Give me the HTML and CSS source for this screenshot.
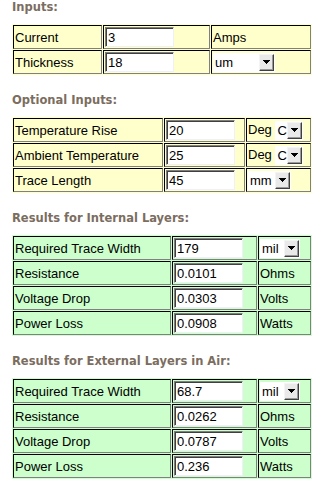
FILE: index.html
```html
<!DOCTYPE html>
<html lang="en">
<head>
<meta charset="UTF-8" />
<meta name="viewport" content="width=device-width, initial-scale=1" />
<title>Trace Width Calculator</title>
<link rel="stylesheet" href="styles.css">
</head>
<body>

<h3>Inputs:</h3>
<table class="calc basic">
  <tr>
    <td class="lbl">Current</td>
    <td class="val"><input type="text" value="3"></td>
    <td class="unit">Amps</td>
  </tr>
  <tr>
    <td class="lbl">Thickness</td>
    <td class="val"><input type="text" value="18"></td>
    <td class="unit">
      <span class="pick w-um"><span class="pick-val">um</span><span class="pick-btn"><svg width="7" height="4" viewBox="0 0 7 4"><path d="M0 0h7v1h-1v1h-1v1h-1v1h-1v-1h-1v-1h-1v-1h-1z"/></svg></span></span>
    </td>
  </tr>
</table>

<h3>Optional Inputs:</h3>
<table class="calc optional">
  <tr>
    <td class="lbl">Temperature Rise</td>
    <td class="val"><input type="text" value="20"></td>
    <td class="unit">Deg <span class="pick w-c"><span class="pick-val">C</span><span class="pick-btn"><svg width="7" height="4" viewBox="0 0 7 4"><path d="M0 0h7v1h-1v1h-1v1h-1v1h-1v-1h-1v-1h-1v-1h-1z"/></svg></span></span></td>
  </tr>
  <tr>
    <td class="lbl">Ambient Temperature</td>
    <td class="val"><input type="text" value="25"></td>
    <td class="unit">Deg <span class="pick w-c"><span class="pick-val">C</span><span class="pick-btn"><svg width="7" height="4" viewBox="0 0 7 4"><path d="M0 0h7v1h-1v1h-1v1h-1v1h-1v-1h-1v-1h-1v-1h-1z"/></svg></span></span></td>
  </tr>
  <tr>
    <td class="lbl">Trace Length</td>
    <td class="val"><input type="text" value="45"></td>
    <td class="unit"><span class="pick w-mm"><span class="pick-val">mm</span><span class="pick-btn"><svg width="7" height="4" viewBox="0 0 7 4"><path d="M0 0h7v1h-1v1h-1v1h-1v1h-1v-1h-1v-1h-1v-1h-1z"/></svg></span></span></td>
  </tr>
</table>

<h3>Results for Internal Layers:</h3>
<table class="calc results">
  <tr>
    <td class="lbl">Required Trace Width</td>
    <td class="val"><input type="text" value="179"></td>
    <td class="unit"><span class="pick w-mil"><span class="pick-val">mil</span><span class="pick-btn"><svg width="7" height="4" viewBox="0 0 7 4"><path d="M0 0h7v1h-1v1h-1v1h-1v1h-1v-1h-1v-1h-1v-1h-1z"/></svg></span></span></td>
  </tr>
  <tr>
    <td class="lbl">Resistance</td>
    <td class="val"><input type="text" value="0.0101"></td>
    <td class="unit">Ohms</td>
  </tr>
  <tr>
    <td class="lbl">Voltage Drop</td>
    <td class="val"><input type="text" value="0.0303"></td>
    <td class="unit">Volts</td>
  </tr>
  <tr>
    <td class="lbl">Power Loss</td>
    <td class="val"><input type="text" value="0.0908"></td>
    <td class="unit">Watts</td>
  </tr>
</table>

<h3>Results for External Layers in Air:</h3>
<table class="calc results">
  <tr>
    <td class="lbl">Required Trace Width</td>
    <td class="val"><input type="text" value="68.7"></td>
    <td class="unit"><span class="pick w-mil"><span class="pick-val">mil</span><span class="pick-btn"><svg width="7" height="4" viewBox="0 0 7 4"><path d="M0 0h7v1h-1v1h-1v1h-1v1h-1v-1h-1v-1h-1v-1h-1z"/></svg></span></span></td>
  </tr>
  <tr>
    <td class="lbl">Resistance</td>
    <td class="val"><input type="text" value="0.0262"></td>
    <td class="unit">Ohms</td>
  </tr>
  <tr>
    <td class="lbl">Voltage Drop</td>
    <td class="val"><input type="text" value="0.0787"></td>
    <td class="unit">Volts</td>
  </tr>
  <tr>
    <td class="lbl">Power Loss</td>
    <td class="val"><input type="text" value="0.236"></td>
    <td class="unit">Watts</td>
  </tr>
</table>

</body>
</html>
```

FILE: styles.css
```css
body {
  font-family: "Liberation Sans", Arial, sans-serif;
  font-size: 13px;
  color: #000;
  background: #fff;
  margin: 0 9px 0 12px;
}
h3 {
  font-family: "DejaVu Sans", Verdana, sans-serif;
  font-size: 11.5px;
  font-weight: bold;
  line-height: 14px;
  color: #7b6d60;
  margin: 0 0 10px 0;
}
.calc {
  width: 300px;
  table-layout: fixed;
  border-collapse: separate;
  border-spacing: 1px;
  margin-bottom: 18px;
}
.calc td {
  box-sizing: border-box;
  height: 24px;
  padding: 1px;
  border: 1px solid;
  border-color: #000 #808080 #808080 #000;
  vertical-align: middle;
  white-space: nowrap;
  overflow: hidden;
}
.basic, .optional {
  background: #ffffcc;
}
.results {
  background: #ccffcc;
}
.basic .lbl { width: 89px; }
.basic .val { width: 107px; }
.optional .lbl { width: 150px; }
.optional .val { width: 81px; }
.results .lbl { width: 158px; }
.results .val { width: 85px; }

.val input {
  display: block;
  box-sizing: border-box;
  width: 69px;
  height: 20px;
  margin: 0;
  padding: 0 2px;
  font: 13px "Liberation Sans", Arial, sans-serif;
  color: #000;
  background: #fff;
  border: 1px solid;
  border-color: #7f7f7f #f0f0f8 #f0f0f8 #7f7f7f;
  box-shadow: inset 1px 1px #404040;
  outline: none;
}

/* dropdown boxes */
.pick {
  display: inline-flex;
  align-items: center;
  box-sizing: border-box;
  height: 19px;
  padding: 1px;
  background: #fff;
  vertical-align: middle;
}
.pick-val {
  flex: 1;
  padding-left: 1px;
}
.pick-btn {
  display: flex;
  align-items: center;
  justify-content: center;
  box-sizing: border-box;
  width: 15px;
  height: 17px;
  background: #e9e9e9;
  border: 1px solid;
  border-color: #f4f4f4 #404040 #404040 #f4f4f4;
  box-shadow: inset -1px -1px #9a9a9a;
}
.pick-btn svg {
  display: block;
  shape-rendering: crispEdges;
}
.w-um { width: 62px; }
.w-c { width: 28px; }
.w-mm { width: 43px; }
.w-mil { width: 40px; }
```
